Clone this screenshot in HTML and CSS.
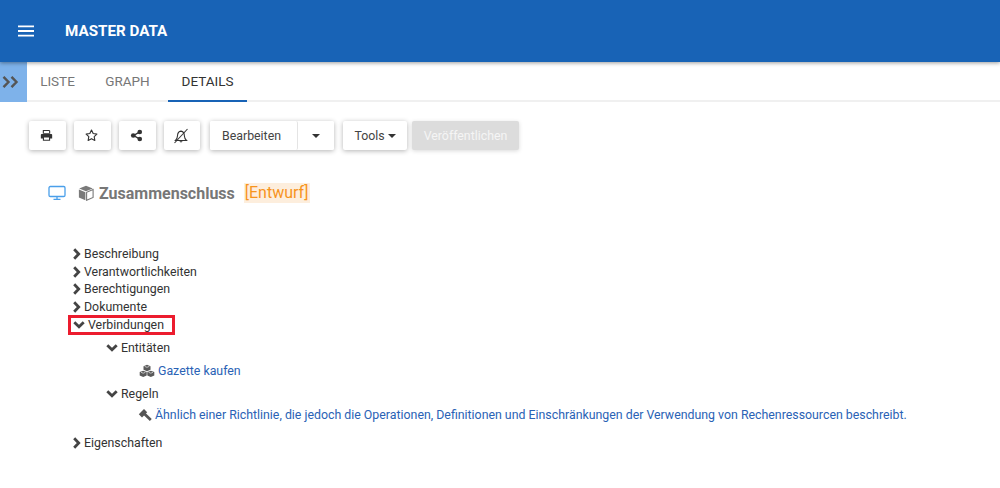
FILE: index.html
```html
<!DOCTYPE html>
<html lang="de">
<head>
<meta charset="utf-8">
<title>Master Data</title>
<link rel="stylesheet" href="styles.css">
</head>
<body>
<header class="appbar">
  <svg class="menu-icon" viewBox="0 0 16 12" width="16" height="12"><path d="M0 0.5h16v1.8H0zM0 5.1h16v1.8H0zM0 9.7h16v1.8H0z" fill="#fff"/></svg>
  <span class="appbar-title">MASTER DATA</span>
</header>
<nav class="tabbar">
  <div class="side-toggle">
    <svg viewBox="0 0 18 12" width="18" height="12"><path d="M1.500 .8l5 5.200-5 5.200M9.500 .8l5 5.200-5 5.200" fill="none" stroke="#555" stroke-width="2.400"/></svg>
  </div>
  <a class="tab tab-list">LISTE</a>
  <a class="tab">GRAPH</a>
  <a class="tab tab-active">DETAILS</a>
</nav>
<main class="content">
  <div class="toolbar">
    <button class="btn btn-icon"><svg viewBox="0 0 14 14" width="13" height="13"><path d="M3 1h7l1 1v3H3zM4.200 2.200v2h5.600v-2z" fill="#333" fill-rule="evenodd"/><path d="M1.800 5.400h10.400c.5 0 .9.4.9.9v3.900h-2.200v2.400H3.100v-2.400H.9V6.300c0-.5.4-.9.9-.9zM4.300 9.200v2.300h5.400V9.200z" fill="#333" fill-rule="evenodd"/></svg></button>
    <button class="btn btn-icon"><svg viewBox="0 0 14 14" width="13" height="13"><path d="M7 1.200l1.800 3.700 4 .6-2.900 2.800.7 4L7 10.400l-3.600 1.900.7-4-2.900-2.800 4-.6z" fill="none" stroke="#333" stroke-width="1.200" stroke-linejoin="round"/></svg></button>
    <button class="btn btn-icon"><svg viewBox="0 0 14 14" width="13" height="13"><path d="M10.500 3L4 7l6.500 4" fill="none" stroke="#333" stroke-width="1.500"/><circle cx="10.500" cy="3.200" r="2.500" fill="#333"/><circle cx="3.500" cy="7" r="2.500" fill="#333"/><circle cx="10.500" cy="10.800" r="2.500" fill="#333"/></svg></button>
    <button class="btn btn-icon btn-bell"><svg viewBox="0 0 16 16" width="16" height="16"><path d="M1.500 15L14.500 1" stroke="#333" stroke-width="1.100"/><path d="M2.500 12.500h11c-1.400-1.300-2-2.600-2.100-4.500-.1-2.800-1.400-4.700-3.400-4.900-2.100.2-3.400 2.100-3.500 4.700-.1 2.100-.6 3.400-2 4.700z" fill="none" stroke="#333" stroke-width="1.100"/><path d="M6.400 13.300a1.700 1.700 0 0 0 3.200 0z" fill="#333"/></svg></button>
    <div class="btn-group">
      <button class="btn btn-text btn-edit">Bearbeiten</button>
      <button class="btn btn-caret-only"><span class="caret"></span></button>
    </div>
    <button class="btn btn-text btn-tools">Tools <span class="caret"></span></button>
    <button class="btn btn-text btn-disabled">Veröffentlichen</button>
  </div>

  <div class="title-row">
    <svg class="monitor" viewBox="0 0 18 16" width="18" height="16"><rect x="1" y="1.500" width="16" height="10" rx="1.300" fill="none" stroke="#4a9fea" stroke-width="1.300"/><path d="M5.500 14.300h7M9 12v2.300" stroke="#4a9fea" stroke-width="1.300"/></svg>
    <svg class="cube" viewBox="0 0 16 16" width="16" height="16"><path d="M8 .8l6.800 2.700L8 6.300 1.200 3.500z" fill="#7a7a7a"/><path d="M.9 4.600l6.500 2.700v8L.9 12.500z" fill="#7a7a7a"/><path d="M15.100 4.600L8.600 7.300v8l6.500-2.800z" fill="none" stroke="#7a7a7a" stroke-width="1.100"/></svg>
    <h1 class="title">Zusammenschluss</h1>
    <span class="draft">[Entwurf]</span>
  </div>

  <ul class="tree">
    <li class="row"><svg class="chev" viewBox="0 0 10 12" width="10" height="12"><path d="M2.200 1.300L6.700 6l-4.500 4.700" fill="none" stroke="#444" stroke-width="2.800"/></svg>Beschreibung</li>
    <li class="row"><svg class="chev" viewBox="0 0 10 12" width="10" height="12"><path d="M2.200 1.300L6.700 6l-4.500 4.700" fill="none" stroke="#444" stroke-width="2.800"/></svg>Verantwortlichkeiten</li>
    <li class="row"><svg class="chev" viewBox="0 0 10 12" width="10" height="12"><path d="M2.200 1.300L6.700 6l-4.500 4.700" fill="none" stroke="#444" stroke-width="2.800"/></svg>Berechtigungen</li>
    <li class="row"><svg class="chev" viewBox="0 0 10 12" width="10" height="12"><path d="M2.200 1.300L6.700 6l-4.500 4.700" fill="none" stroke="#444" stroke-width="2.800"/></svg>Dokumente</li>
    <li class="row row-open">
      <span class="highlight"></span>
      <svg class="chev-down" viewBox="0 0 12 8" width="12" height="8"><path d="M1.300 1.300L6 5.800l4.700-4.500" fill="none" stroke="#444" stroke-width="2.800"/></svg>Verbindungen
    </li>
    <li class="sub-head"><svg class="chev-down" viewBox="0 0 12 8" width="12" height="8"><path d="M1.300 1.300L6 5.800l4.700-4.500" fill="none" stroke="#444" stroke-width="2.800"/></svg>Entitäten</li>
    <li class="leaf leaf-entity">
      <svg class="leaf-icon" viewBox="0 0 16 13" width="16" height="14"><path d="M8 .3l3.500 1.400v3.500L8 6.700 4.500 5.200V1.700z" fill="#5a5a5a"/><path d="M4.200 6.200l3.500 1.400v3.500l-3.500 1.500-3.500-1.500V7.600z" fill="#5a5a5a"/><path d="M11.800 6.200l3.500 1.400v3.500l-3.500 1.500-3.500-1.500V7.600z" fill="#5a5a5a"/><path d="M5.700 1.900L8 2.800l2.300-.9M2 7.800l2.200.9 2.200-.9M9.600 7.800l2.200.9 2.200-.9" fill="none" stroke="#d8d8d8" stroke-width=".8"/></svg>
      <a class="link">Gazette kaufen</a>
    </li>
    <li class="sub-head sub-rules"><svg class="chev-down" viewBox="0 0 12 8" width="12" height="8"><path d="M1.300 1.300L6 5.800l4.700-4.500" fill="none" stroke="#444" stroke-width="2.800"/></svg>Regeln</li>
    <li class="leaf leaf-rule">
      <svg class="leaf-icon-gavel" viewBox="0 0 14 14" width="14" height="14"><path d="M.8 6.200L6 1l3.200 3.200L4 9.400z" fill="#555"/><path d="M5.800 5.200l7 6.800" fill="none" stroke="#555" stroke-width="2.800"/></svg>
      <a class="link">Ähnlich einer Richtlinie, die jedoch die Operationen, Definitionen und Einschränkungen der Verwendung von Rechenressourcen beschreibt.</a>
    </li>
    <li class="row row-last"><svg class="chev" viewBox="0 0 10 12" width="10" height="12"><path d="M2.200 1.300L6.700 6l-4.500 4.700" fill="none" stroke="#444" stroke-width="2.800"/></svg>Eigenschaften</li>
  </ul>
</main>
</body>
</html>
```
FILE: styles.css
```css
* { box-sizing: border-box; }
html, body { margin: 0; padding: 0; }
body {
  width: 1000px;
  height: 488px;
  overflow: hidden;
  background: #fff;
  font-family: Roboto, "Liberation Sans", sans-serif;
  color: #333;
}
.appbar {
  height: 62px;
  background: #1863b6;
  display: flex;
  align-items: center;
  padding-left: 18px;
  box-shadow: 0 1px 4px rgba(0,0,0,.4);
  position: relative;
  z-index: 2;
}
.menu-icon { display: block; margin-right: 31px; }
.appbar-title { color: #fff; font-size: 15.2px; font-weight: 700; }
.tabbar {
  height: 40px;
  display: flex;
  border-bottom: 2px solid #f0f0f0;
}
.side-toggle {
  width: 27px;
  height: 40px;
  background: #7eb2ea;
  display: flex;
  align-items: center;
  padding-left: 2px;
}
.tab {
  width: 79px;
  height: 40px;
  display: flex;
  align-items: center;
  justify-content: center;
  padding-bottom: 2px;
  font-size: 13.5px;
  color: #777;
}
.tab-list { width: 61px; }
.tab-active { color: #333; border-bottom: 2px solid #1863b6; margin-left: 1px; padding-bottom: 0; }
.content { padding: 19px 0 0 29px; }
.toolbar { display: flex; align-items: stretch; height: 29px; }
.btn {
  border: 0;
  background: #fff;
  font-family: inherit;
  font-size: 12.35px;
  color: #444;
  height: 29px;
  padding: 0;
  border-radius: 2px;
  box-shadow: 0 1px 5px rgba(0,0,0,.3);
  display: flex;
  align-items: center;
  justify-content: center;
}
.btn-icon { width: 37px; margin-right: 8px; padding-right: 3px; }
.btn-bell { width: 36px; margin-right: 10px; }
.btn-group { display: flex; margin-right: 9px; box-shadow: 0 1px 5px rgba(0,0,0,.3); border-radius: 2px; }
.btn-group .btn { box-shadow: none; }
.btn-edit { width: 88px; border-right: 1px solid #e4e4e4; justify-content: flex-start; padding-left: 12px; }
.btn-caret-only { width: 36px; }
.btn-tools { width: 64px; margin-right: 5px; gap: 3px; }
.btn-disabled { width: 107px; background: #dcdcdc; color: #f5f5f5; box-shadow: 0 1px 4px rgba(0,0,0,.15); }
.caret {
  display: inline-block;
  width: 0;
  height: 0;
  border-left: 4px solid transparent;
  border-right: 4px solid transparent;
  border-top: 4px solid #333;
}
.title-row { display: flex; align-items: center; margin: 31px 0 0 19px; height: 24px; }
.monitor { margin-right: 12px; }
.cube { margin-right: 5px; }
.title { margin: 0; font-size: 16px; font-weight: 700; color: #777; }
.draft { margin-left: 9px; font-size: 16px; color: #f7941d; background: #fdeedd; padding: 0 1px; line-height: 20px; }
.tree { list-style: none; margin: 0; padding: 0; font-size: 12.35px; color: #333; margin-top: 40px; }
.row { height: 17.8px; display: flex; align-items: center; padding-left: 43px; position: relative; }
.chev { margin-right: 2px; flex: none; }
.chev-down { margin-right: 3px; flex: none; }
.row-open { padding-left: 44px; }
.highlight {
  position: absolute;
  left: 39px;
  top: -1px;
  width: 107px;
  height: 20px;
  border: 3px solid #ec1c2e;
}
.sub-head { height: 18px; margin-top: 5px; padding-left: 77px; display: flex; align-items: center; }
.sub-rules { margin-top: 5px; }
.leaf { display: flex; align-items: center; height: 18px; margin-top: 5px; }
.leaf-entity { padding-left: 110px; }
.leaf-icon { margin-right: 3px; flex: none; }
.leaf-rule { padding-left: 109px; margin-top: 3px; }
.leaf-icon-gavel { margin-right: 3px; flex: none; }
.link { color: #2a62b5; }
.row-last { margin-top: 10px; }
```
